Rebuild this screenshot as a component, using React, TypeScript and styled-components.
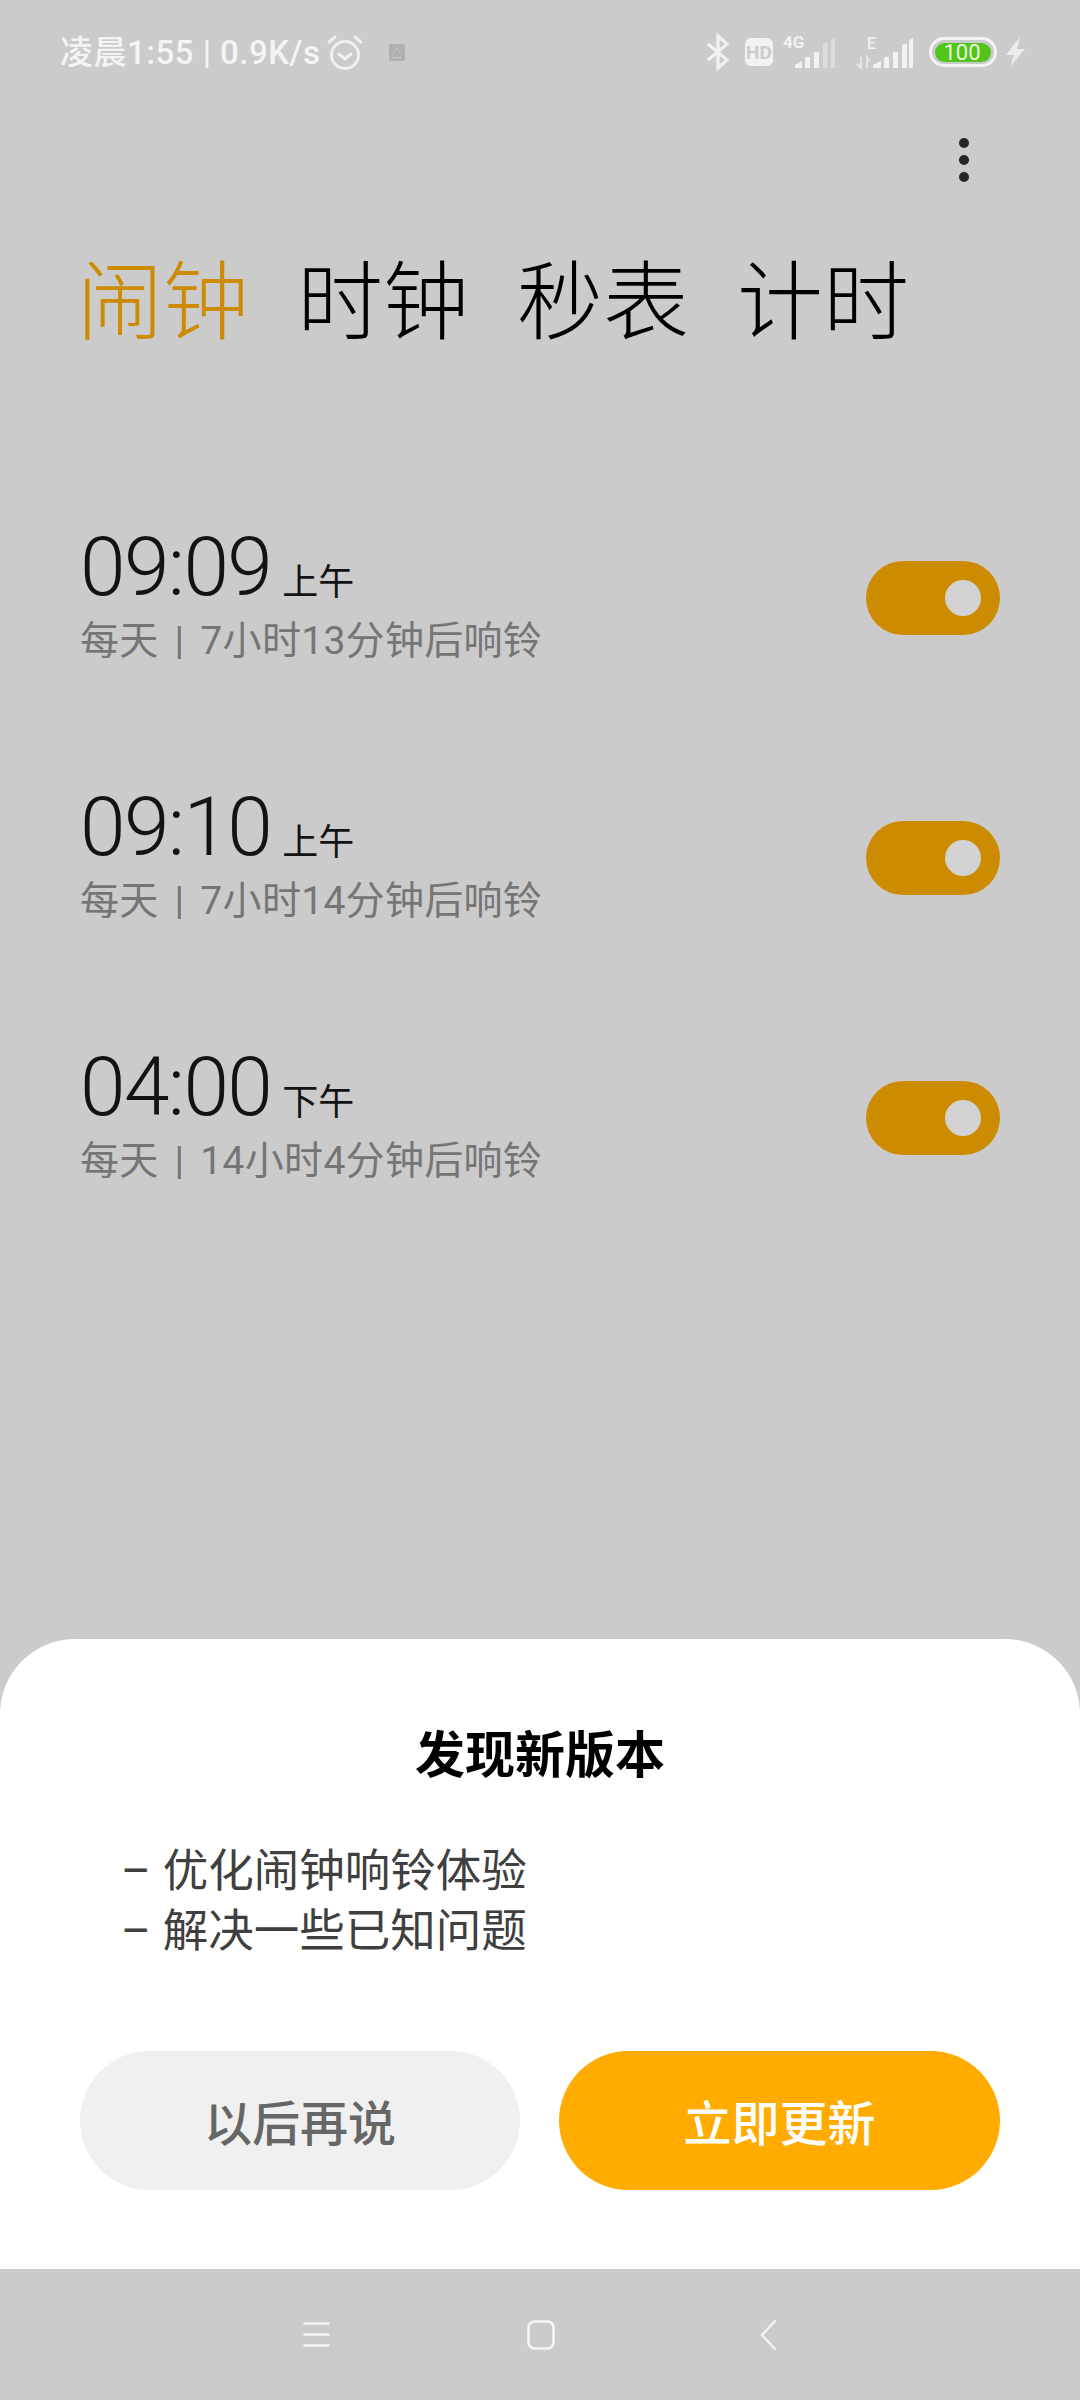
import React from "react";
import styled, { createGlobalStyle } from "styled-components";

const Global = createGlobalStyle`
  html, body { margin: 0; padding: 0; background: #cbcbcb; }
  * { box-sizing: border-box; }
`;

const Page = styled.div`
  width: 1080px;
  height: 2400px;
  background: #cbcbcb;
  display: flex;
  flex-direction: column;
  font-family: Roboto, "Noto Sans CJK SC", sans-serif;
  overflow: hidden;
`;

const StatusBar = styled.div`
  height: 104px;
  padding: 0 54px 0 60px;
  display: flex;
  align-items: center;
  justify-content: space-between;
  color: #f4f4f4;
`;
const StatusGroup = styled.div`
  display: flex;
  align-items: center;
`;
const StatusText = styled.span`
  font-size: 33px;
  font-weight: 500;
  letter-spacing: 0.5px;
  white-space: nowrap;
  line-height: 1;
`;
const Icon = styled.svg<{ $ml?: number }>`
  display: block;
  flex: none;
  overflow: visible;
  margin-left: ${(p) => p.$ml ?? 0}px;
`;

const Menu = styled.div`
  margin-top: 28px;
  height: 56px;
  padding-right: 111px;
  display: flex;
  flex-direction: column;
  align-items: flex-end;
  justify-content: center;
  gap: 7px;
`;
const Dot = styled.span`
  width: 10px;
  height: 10px;
  border-radius: 50%;
  background: #262626;
`;

const Tabs = styled.div`
  display: flex;
  gap: 48px;
  padding: 66px 0 0 77px;
`;
const Tab = styled.div<{ $active?: boolean }>`
  font-size: 86px;
  line-height: 100px;
  font-weight: 300;
  color: ${(p) => (p.$active ? "#cc8b00" : "#000")};
`;

const Alarms = styled.div`
  padding: 160px 80px 0;
  display: flex;
  flex-direction: column;
`;
const Alarm = styled.div`
  height: 260px;
  display: flex;
  align-items: flex-start;
  justify-content: space-between;
`;
const AlarmInfo = styled.div`
  display: flex;
  flex-direction: column;
`;
const TimeRow = styled.div`
  display: flex;
  align-items: baseline;
  gap: 11px;
  height: 100px;
  line-height: 106px;
`;
const Time = styled.span`
  font-size: 82px;
  font-weight: 300;
  letter-spacing: -1.6px;
  color: #131313;
`;
const Period = styled.span`
  font-size: 36px;
  font-weight: 400;
  color: #131313;
`;
const AlarmSub = styled.div`
  font-size: 39px;
  line-height: 50px;
  word-spacing: 6px;
  letter-spacing: 0.3px;
  color: #757575;
  margin-top: 2px;
`;
const Toggle = styled.div`
  width: 134px;
  height: 74px;
  border-radius: 37px;
  background: #cc8b00;
  margin-top: 47px;
  padding-right: 19px;
  display: flex;
  align-items: center;
  justify-content: flex-end;
`;
const Knob = styled.span`
  width: 36px;
  height: 36px;
  border-radius: 50%;
  background: #d2d2d2;
`;

const Spacer = styled.div`
  flex: 1;
`;

const Sheet = styled.div`
  height: 630px;
  background: #fff;
  border-radius: 75px 75px 0 0;
  padding: 82px 80px 0;
  display: flex;
  flex-direction: column;
`;
const SheetTitle = styled.div`
  text-align: center;
  font-size: 50px;
  line-height: 70px;
  font-weight: 700;
  color: #000;
`;
const Notes = styled.div`
  margin-top: 51px;
  padding-left: 41px;
  font-size: 45.5px;
  line-height: 60px;
  color: #3f3f3f;
`;
const NoteLine = styled.div`
  display: flex;
  gap: 12px;
`;
const Buttons = styled.div`
  margin-top: 89px;
  display: grid;
  grid-template-columns: 440px 441px;
  column-gap: 39px;
`;
const Button = styled.div<{ $primary?: boolean }>`
  height: 139px;
  border-radius: 70px;
  display: flex;
  align-items: center;
  justify-content: center;
  padding-bottom: 2px;
  font-size: 48px;
  font-weight: 500;
  background: ${(p) => (p.$primary ? "#ffab00" : "#f0f0f0")};
  color: ${(p) => (p.$primary ? "#fff" : "#666")};
`;

const NavRow = styled.div`
  height: 131px;
  display: flex;
  align-items: center;
  padding-left: 303px;
`;

const alarms = [
  { time: "09:09", period: "上午", sub: "每天 | 7小时13分钟后响铃" },
  { time: "09:10", period: "上午", sub: "每天 | 7小时14分钟后响铃" },
  { time: "04:00", period: "下午", sub: "每天 | 14小时4分钟后响铃" },
];

export default function App() {
  return (
    <Page>
      <Global />
      <StatusBar>
        <StatusGroup>
          <StatusText>凌晨1:55 | 0.9K/s</StatusText>
          <Icon $ml={7} width="36" height="38" viewBox="0 0 36 38" fill="none" stroke="#f0f0f0" strokeLinecap="round">
            <circle cx="18" cy="22" r="13.5" strokeWidth="3" />
            <path d="M12 21l6 5 6-5" strokeWidth="3" />
            <path d="M2 9l6-5M34 9l-6-5" strokeWidth="3" />
          </Icon>
          <Icon $ml={26} width="16" height="17" viewBox="0 0 16 17">
            <rect width="16" height="17" rx="2" fill="#b0b0b0" />
            <path d="M3 13.500h10M4 9.500l3.500-6 3.500 5" stroke="#e0e0e0" strokeWidth="1" strokeDasharray="1 1" fill="none" />
          </Icon>
        </StatusGroup>
        <StatusGroup>
          <Icon width="22" height="36" viewBox="0 0 22 36" fill="none" stroke="#f0f0f0" strokeWidth="3.4">
            <path d="M1 10l19 16-9 8V2l9 8L1 26" />
          </Icon>
          <Icon $ml={16} width="28" height="28" viewBox="0 0 28 28">
            <rect width="28" height="28" rx="6" fill="#f2f2f2" />
            <text x="14" y="20.5" textAnchor="middle" fontSize="19" fontWeight="700" fontFamily="Roboto" fill="#cbcbcb">HD</text>
          </Icon>
          <Icon $ml={10} width="52" height="32" viewBox="0 0 52 32">
            <text x="0" y="12" fontSize="17" fontWeight="700" fontFamily="Roboto" fill="#f2f2f2">4G</text>
            <path d="M12 32v-3l7-4v7zM22 32V21h5v11zM31 32V16h5v16z" fill="#f2f2f2" />
            <path d="M40 32V8l4.500-2v26zM48 32V4l4-2v30z" fill="#dcdcdc" />
          </Icon>
          <Icon $ml={21} width="57" height="32" viewBox="0 0 57 32">
            <text x="11" y="13" fontSize="16" fontWeight="500" fontFamily="Roboto" fill="#f2f2f2">E</text>
            <path d="M5 21v11l-4-4M11 32V21l3 4" stroke="#e8e8e8" strokeWidth="1.8" fill="none" />
            <path d="M17 32v-3l8-4v7zM28 32V21h5v11zM37 32V16h5v16zM46 32V9l5-2v25zM53 32V4l4-2v30z" fill="#f2f2f2" />
          </Icon>
          <Icon $ml={16} width="68" height="30" viewBox="0 0 68 30">
            <rect x="1.5" y="1.5" width="65" height="27" rx="13.500" fill="none" stroke="#f4f4f4" strokeWidth="3" />
            <rect x="6" y="6" width="56" height="19" rx="9.500" fill="#52c41a" />
            <text x="33" y="23" textAnchor="middle" fontSize="22" fontFamily="Roboto" fill="#e9f7df">100</text>
          </Icon>
          <Icon $ml={9} width="20" height="30" viewBox="0 0 20 30">
            <path d="M14 0L0 18h8L4 30 19 12h-8z" fill="#ececec" />
          </Icon>
        </StatusGroup>
      </StatusBar>
      <Menu>
        <Dot />
        <Dot />
        <Dot />
      </Menu>
      <Tabs>
        <Tab $active>闹钟</Tab>
        <Tab>时钟</Tab>
        <Tab>秒表</Tab>
        <Tab>计时</Tab>
      </Tabs>
      <Alarms>
        {alarms.map((a) => (
          <Alarm key={a.sub}>
            <AlarmInfo>
              <TimeRow>
                <Time>{a.time}</Time>
                <Period>{a.period}</Period>
              </TimeRow>
              <AlarmSub>{a.sub}</AlarmSub>
            </AlarmInfo>
            <Toggle>
              <Knob />
            </Toggle>
          </Alarm>
        ))}
      </Alarms>
      <Spacer />
      <Sheet>
        <SheetTitle>发现新版本</SheetTitle>
        <Notes>
          <NoteLine>
            <span>–</span>
            <span>优化闹钟响铃体验</span>
          </NoteLine>
          <NoteLine>
            <span>–</span>
            <span>解决一些已知问题</span>
          </NoteLine>
        </Notes>
        <Buttons>
          <Button>以后再说</Button>
          <Button $primary>立即更新</Button>
        </Buttons>
      </Sheet>
      <NavRow>
        <Icon width="27" height="25" viewBox="0 0 27 25" stroke="#f6f6f6" strokeWidth="2.4" strokeLinecap="round">
          <path d="M1.500 1.500h24M1.500 12.500h24M1.500 23.500h24" />
        </Icon>
        <Icon $ml={197} width="28" height="30" viewBox="0 0 28 30" fill="none" stroke="#f6f6f6" strokeWidth="2.6">
          <rect x="1.500" y="1.500" width="25" height="27" rx="6" />
        </Icon>
        <Icon $ml={205} width="16" height="30" viewBox="0 0 16 30" fill="none" stroke="#f6f6f6" strokeWidth="2.2" strokeLinecap="round">
          <path d="M15 1L2 15l13 14" />
        </Icon>
      </NavRow>
    </Page>
  );
}
